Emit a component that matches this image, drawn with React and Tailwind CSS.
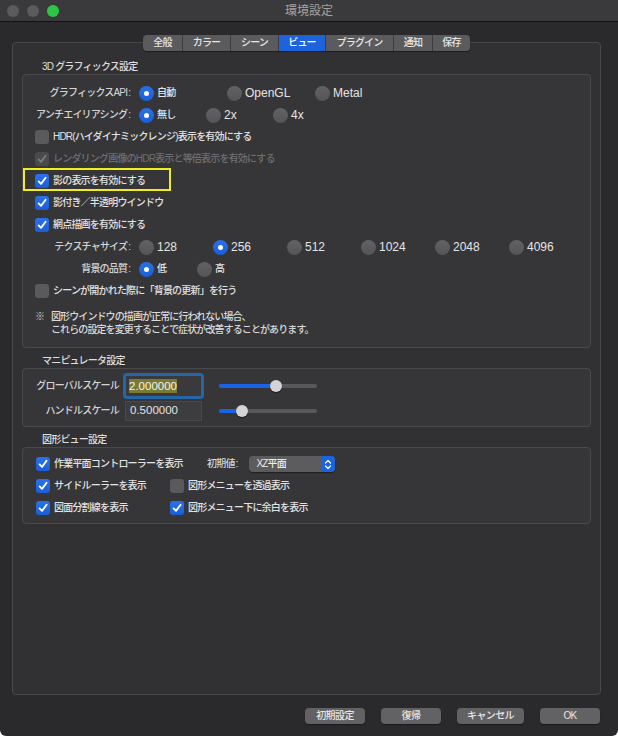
import React from 'react';

const TABS = [
  { label: '全般', w: 'w-[39px]' },
  { label: 'カラー', w: 'w-[48px]' },
  { label: 'シーン', w: 'w-[48px]' },
  { label: 'ビュー', w: 'w-[47px]', active: true },
  { label: 'プラグイン', w: 'w-[68px]' },
  { label: '通知', w: 'w-[39px]' },
  { label: '保存', w: 'w-[38px]' },
];

function Check({ on, disabled }) {
  let cls = 'bg-[#5a5a5c]';
  if (on) cls = 'bg-gradient-to-b from-[#2a72ea] to-[#1a5ed6]';
  if (disabled) cls = 'bg-[#4a4a4c]';
  return (
    <span className={`w-[14px] h-[14px] rounded-[3px] shrink-0 flex items-center justify-center ${cls}`}>
      {on && (
        <svg width="12" height="12" viewBox="0 0 12 12">
          <path d="M2.6 6.4 L5 8.9 L9.6 2.8" fill="none" stroke={disabled ? '#7b7b7d' : '#ffffff'} strokeWidth="1.8" strokeLinecap="round" strokeLinejoin="round" />
        </svg>
      )}
    </span>
  );
}

function Radio({ on }) {
  return (
    <span className={`w-[15px] h-[15px] rounded-full shrink-0 flex items-center justify-center ${on ? 'bg-gradient-to-b from-[#2a72ea] to-[#1a5ed6]' : 'bg-gradient-to-b from-[#626264] to-[#555557]'}`}>
      {on && <span className="w-[5px] h-[5px] rounded-full bg-white" />}
    </span>
  );
}

function CheckRow({ label, on, disabled, children }) {
  return (
    <div className="relative h-[22px] flex items-center pl-[12px] gap-[4px]">
      <Check on={on} disabled={disabled} />
      <span className={`tracking-[-0.8px] ${disabled ? 'text-[#6e6e70]' : 'text-[#e2e2e2]'}`}>{label}</span>
      {children}
    </div>
  );
}

function Colon() {
  return <span className="ml-[1px] tracking-normal">:</span>;
}

function RadioRow({ label, options, width, selected }) {
  return (
    <div className="h-[22px] flex items-center">
      <div className="w-[108px] text-right tracking-[-0.8px] text-[#d4d4d4]">
        {label}
        <Colon />
      </div>
      <div className="flex ml-[8px]">
        {options.map((o) => (
          <div key={o.t} className={`flex items-center gap-[3px] ${width}`}>
            <Radio on={o.t === selected} />
            <span className={o.latin ? 'text-[12px] text-[#e4e4e4]' : 'tracking-[-0.8px] text-[#e4e4e4]'}>{o.t}</span>
          </div>
        ))}
      </div>
    </div>
  );
}

function Slider({ value }) {
  return (
    <div className="relative w-[98px] h-[12px] flex items-center">
      <div className="w-full h-[4px] rounded-full bg-[#58585a] overflow-hidden">
        <div className="h-full bg-[#1a62e6]" style={{ width: `${value}%` }} />
      </div>
      <span
        className="absolute top-0 w-[12px] h-[12px] rounded-full bg-[#d4d4d4] shadow-[0_1px_1px_rgba(0,0,0,0.5)]"
        style={{ left: `calc(${value}% - 6px)` }}
      />
    </div>
  );
}

function Heading({ children, first }) {
  return (
    <div className={`h-[12px] leading-[12px] ml-[20px] mb-[1px] tracking-[-0.8px] text-[#dedede] ${first ? 'mt-[18px]' : 'mt-[7px]'}`}>
      {children}
    </div>
  );
}

export default function App() {
  return (
    <div className="w-[618px] h-[736px] bg-white font-['Liberation_Sans','Noto_Sans_CJK_JP',sans-serif] font-medium text-[10px] leading-none">
      <div className="w-full h-full bg-[#2a2a2c] rounded-b-[6px] overflow-hidden flex flex-col">
        {/* title bar */}
        <div className="h-[22px] shrink-0 bg-[#3a3a3c] border-b border-[#121212] grid grid-cols-[1fr_auto_1fr] items-center">
          <div className="flex items-center gap-[8px] pl-[7px]">
            <span className="w-[12px] h-[12px] rounded-full bg-[#5b5b5d]" />
            <span className="w-[12px] h-[12px] rounded-full bg-[#5b5b5d]" />
            <span className="w-[12px] h-[12px] rounded-full bg-[#2cc644]" />
          </div>
          <div className="text-[12px] font-normal text-[#a3a3a3]">環境設定</div>
          <div />
        </div>

        <div className="ml-[12px] w-[589px] pt-[13px]">
          {/* tabs */}
          <div className="relative z-10 flex justify-center">
            <div className="flex h-[16px] rounded-[4px] overflow-hidden bg-[#5b5b5d] shadow-[0_1px_1px_rgba(0,0,0,0.4)]">
              {TABS.map((t, i) => (
                <div
                  key={t.label}
                  className={`${t.w} flex items-center justify-center tracking-[-0.8px] ${i > 0 ? 'border-l border-[#3c3c3e]' : ''} ${t.active ? 'bg-[#1d63dc] text-white' : 'text-[#e6e6e6]'}`}
                >
                  {t.label}
                </div>
              ))}
            </div>
          </div>

          {/* panel */}
          <div className="-mt-[9px] h-[653px] rounded-[4px] border border-[#48484a] bg-[#313133] px-[9px]">
            <Heading first>3D グラフィックス設定</Heading>
            <div className="rounded-[4px] border border-[#4a4a4c] bg-[#363638] pt-[7px] pb-[11px]">
              <RadioRow
                label="グラフィックスAPI"
                width="w-[88px]"
                selected="自動"
                options={[{ t: '自動' }, { t: 'OpenGL', latin: true }, { t: 'Metal', latin: true }]}
              />
              <RadioRow
                label="アンチエイリアシング"
                width="w-[67px]"
                selected="無し"
                options={[{ t: '無し' }, { t: '2x', latin: true }, { t: '4x', latin: true }]}
              />
              <CheckRow label="HDR(ハイダイナミックレンジ)表示を有効にする" />
              <CheckRow label="レンダリング画像のHDR表示と等倍表示を有効にする" on disabled />
              <CheckRow label="影の表示を有効にする" on>
                <span className="absolute left-0 top-[-2px] w-[148px] h-[23px] border-2 border-[#f0ef1c]" />
              </CheckRow>
              <CheckRow label="影付き／半透明ウインドウ" on />
              <CheckRow label="網点描画を有効にする" on />
              <RadioRow
                label="テクスチャサイズ"
                width="w-[74px]"
                selected="256"
                options={['128', '256', '512', '1024', '2048', '4096'].map((t) => ({ t, latin: true }))}
              />
              <RadioRow label="背景の品質" width="w-[58px]" selected="低" options={[{ t: '低' }, { t: '高' }]} />
              <CheckRow label="シーンが開かれた際に「背景の更新」を行う" />
              <div className="flex pl-[12px] mt-[8px] tracking-[-0.9px] text-[#dadada]">
                <span className="w-[16px] leading-[13px]">※</span>
                <div className="leading-[13px]">
                  <div>図形ウインドウの描画が正常に行われない場合、</div>
                  <div>これらの設定を変更することで症状が改善することがあります。</div>
                </div>
              </div>
            </div>

            <Heading>マニピュレータ設定</Heading>
            <div className="rounded-[4px] border border-[#4a4a4c] bg-[#363638] pt-[4px] pb-[5px]">
              <div className="h-[26px] flex items-center">
                <div className="w-[96px] text-right tracking-[-0.8px] text-[#d4d4d4]">グローバルスケール</div>
                <div className="ml-[4px] w-[81px] h-[26px] rounded-[4px] border-[3px] border-[#2766a6] bg-[#3a3a3c] flex items-center pl-[3px]">
                  <span className="bg-[#7b7a32] text-[#f4f4f4] text-[11.5px] leading-[14px]">2.000000</span>
                </div>
                <div className="ml-[15px]">
                  <Slider value={58} />
                </div>
              </div>
              <div className="h-[20px] mt-[2px] flex items-center">
                <div className="w-[96px] text-right tracking-[-0.8px] text-[#d4d4d4]">ハンドルスケール</div>
                <div className="ml-[6px] w-[77px] h-[20px] border border-[#48484a] bg-[#3d3d3f] flex items-center pl-[4px]">
                  <span className="text-[#e2e2e2] text-[11.5px]">0.500000</span>
                </div>
                <div className="ml-[17px]">
                  <Slider value={23} />
                </div>
              </div>
            </div>

            <Heading>図形ビュー設定</Heading>
            <div className="rounded-[4px] border border-[#4a4a4c] bg-[#363638] pt-[5px] pb-[4px] text-[#e2e2e2]">
              <div className="h-[22px] flex items-center pl-[13px]">
                <div className="w-[171px] flex items-center gap-[4px]">
                  <Check on />
                  <span className="tracking-[-0.8px]">作業平面コントローラーを表示</span>
                </div>
                <span className="tracking-[-0.8px] text-[#d4d4d4]">
                  初期値
                  <Colon />
                </span>
                <div className="ml-[11px] w-[86px] h-[16px] rounded-[4px] bg-[#5c5c5e] flex items-center shadow-[0_1px_1px_rgba(0,0,0,0.4)] overflow-hidden">
                  <span className="flex-1 pl-[7px] tracking-[-0.8px] text-[#ececec]">XZ平面</span>
                  <span className="w-[14px] h-full bg-[#1d63dc] flex items-center justify-center">
                    <svg width="8" height="11" viewBox="0 0 8 11">
                      <path d="M1.5 4 L4 1.5 L6.5 4 M1.5 7 L4 9.5 L6.5 7" fill="none" stroke="#ffffff" strokeWidth="1.2" strokeLinecap="round" strokeLinejoin="round" />
                    </svg>
                  </span>
                </div>
              </div>
              <div className="h-[22px] flex items-center pl-[13px]">
                <div className="w-[134px] flex items-center gap-[4px]">
                  <Check on />
                  <span className="tracking-[-0.8px]">サイドルーラーを表示</span>
                </div>
                <div className="flex items-center gap-[4px]">
                  <Check />
                  <span className="tracking-[-0.8px]">図形メニューを透過表示</span>
                </div>
              </div>
              <div className="h-[22px] flex items-center pl-[13px]">
                <div className="w-[134px] flex items-center gap-[4px]">
                  <Check on />
                  <span className="tracking-[-0.8px]">図面分割線を表示</span>
                </div>
                <div className="flex items-center gap-[4px]">
                  <Check on />
                  <span className="tracking-[-0.8px]">図形メニュー下に余白を表示</span>
                </div>
              </div>
            </div>
          </div>
        </div>

        {/* buttons */}
        <div className="flex justify-end gap-[16px] pr-[18px] mt-[13px]">
          {[
            ['初期設定', 'w-[60px]'],
            ['復帰', 'w-[60px]'],
            ['キャンセル', 'w-[67px]'],
            ['OK', 'w-[60px]'],
          ].map(([t, w]) => (
            <div
              key={t}
              className={`${w} h-[16px] rounded-[4px] bg-[#626264] text-[#e6e6e6] flex items-center justify-center tracking-[-0.6px] shadow-[0_1px_1px_rgba(0,0,0,0.4)]`}
            >
              {t}
            </div>
          ))}
        </div>
      </div>
    </div>
  );
}
